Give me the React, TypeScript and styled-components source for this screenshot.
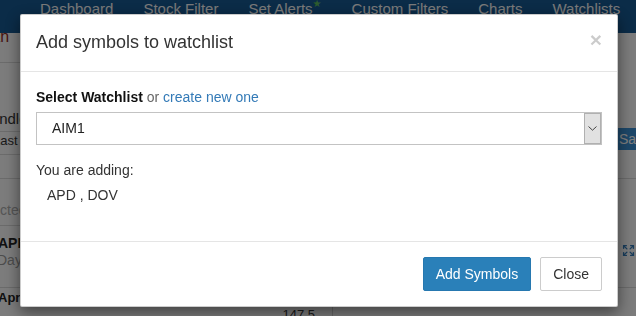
import styled, { createGlobalStyle } from "styled-components";
import { Expand } from "lucide-react";

const GlobalStyle = createGlobalStyle`
  * {
    box-sizing: border-box;
  }
  html,
  body {
    margin: 0;
    padding: 0;
  }
  body {
    width: 636px;
    height: 316px;
    overflow: hidden;
    background: #f8f8f8;
    font-family: "Liberation Sans", Arial, Helvetica, sans-serif;
    font-size: 14px;
    color: #333;
  }
`;

/* ---------- page behind the modal ---------- */

const Page = styled.div`
  width: 680px;
  height: 316px;
`;

const NavBar = styled.nav`
  display: flex;
  height: 33px;
  padding-left: 25px;
  background: #165890;
`;

const NavLink = styled.a`
  padding: 0 15px;
  font-size: 15px;
  line-height: 17px;
  color: #f4f4f4;
  white-space: nowrap;
  text-decoration: none;
`;

const NewStar = styled.span`
  vertical-align: top;
  font-family: "DejaVu Sans", sans-serif;
  font-size: 10px;
  line-height: 8px;
  color: #5cb85c;
`;

const Content = styled.div`
  display: grid;
  grid-template-columns: 333px 1fr;
  height: 283px;
`;

const LeftPanel = styled.div`
  border-right: 1px solid #cfcfcf;
  overflow: hidden;
`;

const RightPanel = styled.div`
  overflow: hidden;
`;

const BgRow = styled.div<{ $h: number; $pt?: number; $line?: boolean }>`
  height: ${(p) => p.$h}px;
  padding-top: ${(p) => p.$pt ?? 0}px;
  border-bottom: ${(p) => (p.$line ? "1px solid #d6d6d6" : "0")};
`;

const BgText = styled.div<{
  $size: number;
  $lh: number;
  $tone?: string;
  $bold?: boolean;
  $indent?: number;
  $right?: boolean;
}>`
  font-size: ${(p) => p.$size}px;
  line-height: ${(p) => p.$lh}px;
  color: ${(p) => p.$tone ?? "#333"};
  font-weight: ${(p) => (p.$bold ? 700 : 400)};
  text-indent: ${(p) => p.$indent ?? 0}px;
  text-align: ${(p) => (p.$right ? "right" : "left")};
  padding-right: ${(p) => (p.$right ? 17 : 0)}px;
  white-space: nowrap;
`;

const Toolbar = styled.div`
  display: flex;
  justify-content: flex-end;
  height: 22px;
  padding-right: 21px;
`;

const SaveButton = styled.button`
  width: 48px;
  padding: 0 8px;
  border: 0;
  border-radius: 2px;
  background: #3a8fd2;
  color: #fff;
  font-family: inherit;
  font-size: 14px;
  text-align: left;
`;

const IconRow = styled.div`
  display: flex;
  justify-content: flex-end;
  height: 109px;
  padding: 65px 45px 0 0;
  border-bottom: 1px solid #d6d6d6;
  color: #337ab7;
`;

/* ---------- modal ---------- */

const Overlay = styled.div`
  position: fixed;
  inset: 0;
  display: flex;
  align-items: flex-start;
  padding: 14px 0 0 20px;
  background: rgba(0, 0, 0, 0.5);
`;

const Dialog = styled.div`
  width: 598px;
  background: #fff;
  border: 1px solid rgba(0, 0, 0, 0.2);
  border-radius: 2px;
  box-shadow: 0 5px 15px rgba(0, 0, 0, 0.5);
`;

const Header = styled.div`
  display: flex;
  justify-content: space-between;
  align-items: flex-start;
  padding: 15px;
  border-bottom: 1px solid #e5e5e5;
`;

const Title = styled.h4`
  margin: 0;
  font-size: 18px;
  font-weight: 400;
  line-height: 25.7px;
  color: #333;
`;

const CloseX = styled.button`
  margin-top: -1px;
  padding: 0;
  border: 0;
  background: none;
  font-family: inherit;
  font-size: 21px;
  font-weight: 700;
  line-height: 21px;
  color: #000;
  opacity: 0.2;
`;

const Body = styled.div`
  padding: 15px;
`;

const Label = styled.div`
  margin-bottom: 5px;
  line-height: 20px;
  color: #666;

  strong {
    color: #111;
  }
  a {
    color: #337ab7;
    text-decoration: none;
  }
`;

const SelectBox = styled.div`
  display: flex;
  height: 33px;
  margin-bottom: 15px;
  border: 1px solid #c3c3c3;
`;

const Select = styled.select`
  flex: 1;
  padding: 0 0 0 15px;
  border: 0;
  outline: 0;
  appearance: none;
  background: transparent;
  font-family: inherit;
  font-size: 14px;
  color: #222;
`;

const ArrowBox = styled.span`
  display: flex;
  align-items: center;
  justify-content: center;
  width: 17px;
  border: 1px solid #b0b0b0;
  background: #e1e1e1;
`;

const Line = styled.div`
  line-height: 20px;
  color: #333;
`;

const Symbols = styled.div`
  margin: 5px 0 21px;
  padding-left: 11px;
  line-height: 20px;
  color: #333;
`;

const Footer = styled.div`
  display: flex;
  justify-content: flex-end;
  gap: 9px;
  padding: 15px;
  border-top: 1px solid #e5e5e5;
`;

const Button = styled.button<{ $primary?: boolean }>`
  height: 34px;
  padding: 6px 12px;
  border: 1px solid ${(p) => (p.$primary ? "#2678b0" : "#ccc")};
  border-radius: 2px;
  background: ${(p) => (p.$primary ? "#2a80b9" : "#fff")};
  color: ${(p) => (p.$primary ? "#fff" : "#333")};
  font-family: inherit;
  font-size: 14px;
  line-height: 20px;
`;

const App = () => {
  return (
    <>
      <GlobalStyle />
      <Page>
        <NavBar>
          <NavLink>Dashboard</NavLink>
          <NavLink>Stock Filter</NavLink>
          <NavLink>
            Set Alerts<NewStar>★</NewStar>
          </NavLink>
          <NavLink>Custom Filters</NavLink>
          <NavLink>Charts</NavLink>
          <NavLink>Watchlists</NavLink>
        </NavBar>

        <Content>
          <LeftPanel>
            <BgRow $h={30} $line>
              <BgText $size={16} $lh={8} $tone="#8e2a22" $indent={-23}>
                Plan
              </BgText>
            </BgRow>
            <BgRow $h={69} $pt={47} $line>
              <BgText $size={15} $lh={18} $indent={-20}>
                Candle
              </BgText>
            </BgRow>
            <BgRow $h={23} $pt={1} $line>
              <BgText $size={13} $lh={16} $indent={-7}>
                Last close
              </BgText>
            </BgRow>
            <BgRow $h={24} $line />
            <BgRow $h={47} $pt={23} $line>
              <BgText $size={14} $lh={17} $tone="#aaa" $indent={-28}>
                Selected
              </BgText>
            </BgRow>
            <BgRow $h={62} $pt={9} $line>
              <BgText $size={14} $lh={17} $bold $tone="#222" $indent={-2}>
                APD
              </BgText>
              <BgText $size={14} $lh={17} $tone="#999" $indent={-3}>
                Day's range
              </BgText>
            </BgRow>
            <BgRow $h={40} $pt={1}>
              <BgText $size={13} $lh={17} $bold $tone="#222" $indent={-2}>
                Apr 20
              </BgText>
              <BgText $size={13} $lh={17} $right>
                147.5
              </BgText>
            </BgRow>
          </LeftPanel>

          <RightPanel>
            <BgRow $h={95} />
            <Toolbar>
              <SaveButton>Save</SaveButton>
            </Toolbar>
            <BgRow $h={29} $line />
            <IconRow>
              <Expand size={13} strokeWidth={2.6} />
            </IconRow>
          </RightPanel>
        </Content>
      </Page>

      <Overlay>
        <Dialog>
          <Header>
            <Title>Add symbols to watchlist</Title>
            <CloseX aria-label="Close">×</CloseX>
          </Header>

          <Body>
            <Label>
              <strong>Select Watchlist</strong> or <a href="#">create new one</a>
            </Label>
            <SelectBox>
              <Select defaultValue="AIM1">
                <option value="AIM1">AIM1</option>
              </Select>
              <ArrowBox>
                <svg width="9" height="5" viewBox="0 0 9 5">
                  <path d="M0.5 0.5 L4.5 4.2 L8.5 0.5" fill="none" stroke="#444" strokeWidth="1" />
                </svg>
              </ArrowBox>
            </SelectBox>
            <Line>You are adding:</Line>
            <Symbols>APD , DOV</Symbols>
          </Body>

          <Footer>
            <Button $primary>Add Symbols</Button>
            <Button>Close</Button>
          </Footer>
        </Dialog>
      </Overlay>
    </>
  );
};

export default App;
